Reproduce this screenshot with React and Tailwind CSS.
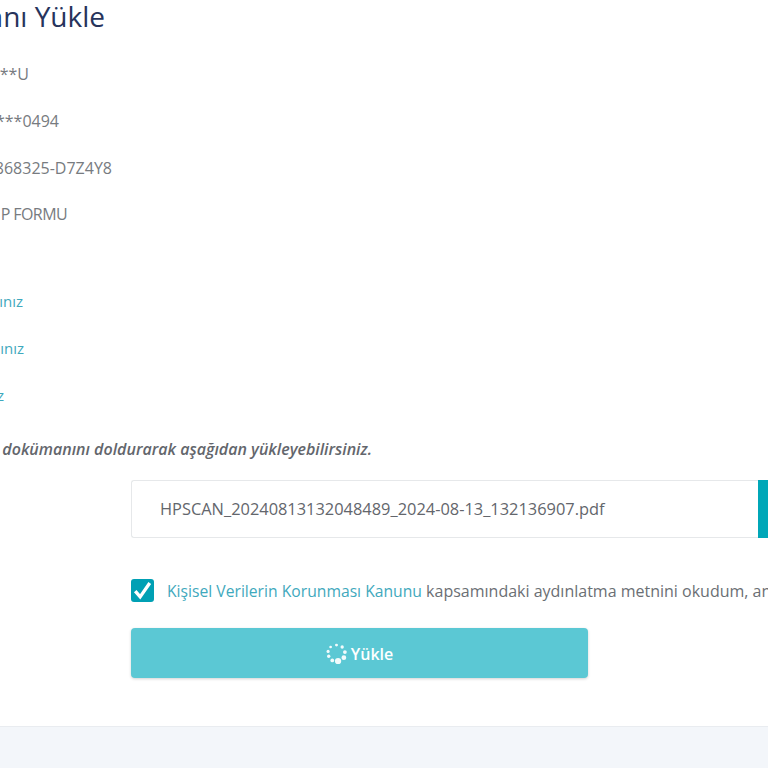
import React from "react";

function Spinner() {
  const dots = [
    [10, 2, 1.4], [15.4, 3.8, 1.6], [18, 8.6, 1.8], [17, 14, 2.3], [11.5, 17.2, 3],
    [6, 16.6, 1.8], [2.6, 12.6, 1.6], [2, 8, 1.5], [4.4, 3.8, 1.3],
  ];
  return (
    <svg width="21" height="21" viewBox="0 0 20 20" className="shrink-0">
      {dots.map(([x, y, r], i) => (
        <circle key={i} cx={x} cy={y} r={r} fill="#ffffff" fillOpacity="0.92" />
      ))}
    </svg>
  );
}

function Clip({ w, className, children }) {
  return <div className={`flex justify-end whitespace-nowrap ${w} ${className}`}>{children}</div>;
}

export default function App() {
  return (
    <div className="h-[768px] w-[768px] overflow-hidden bg-white font-['Open_Sans','Liberation_Sans',sans-serif] flex flex-col">
      <div className="h-[726px] flex flex-col">
        <Clip w="w-[105px]" className="h-[32px] text-[28px] leading-[32px] text-[#27345c]">Dokümanı Yükle</Clip>

        <div className="mt-[19px] flex flex-col text-[16px] leading-[47px] text-[#777b80]">
          <Clip w="w-[29px]" className="h-[47px]">*****U</Clip>
          <Clip w="w-[59px]" className="h-[47px]">*****0494</Clip>
          <Clip w="w-[112px]" className="h-[46px]">868325-D7Z4Y8</Clip>
          <Clip w="w-[67px]" className="h-[47px] tracking-[-0.6px]">P FORMU</Clip>
        </div>

        <div className="mt-[40px] flex flex-col text-[15px] leading-[47px] text-[#3fa9bd]">
          <Clip w="w-[23px]" className="h-[47px]">ınız</Clip>
          <Clip w="w-[24px]" className="h-[47px]">ınız</Clip>
          <Clip w="w-[4px]" className="h-[47px]">z</Clip>
        </div>

        <Clip w="w-[372px]" className="mt-[18px] h-[24px] text-[16px] leading-[24px] italic font-semibold text-[#63666c]">
          dokümanını doldurarak aşağıdan yükleyebilirsiniz.
        </Clip>

        <div className="mt-[19px] ml-[131px] flex flex-col items-start">
          <div className="flex h-[58px] w-[637px] shrink-0">
            <div className="flex h-full w-[627px] shrink-0 items-center rounded-l-[3px] border border-r-0 border-[#e6e8ea] bg-white pl-[28px] text-[16.4px] text-[#63666c] whitespace-nowrap">
              HPSCAN_20240813132048489_2024-08-13_132136907.pdf
            </div>
            <div className="h-full w-[10px] bg-[#00a7b8]" />
          </div>

          <div className="mt-[40px] flex h-[24px] w-[637px] items-center gap-[13px] whitespace-nowrap text-[16px] text-[#6b6f74]">
            <div className="flex h-[23px] w-[23px] shrink-0 items-center justify-center rounded-[3px] bg-[#00a0b4]">
              <svg width="19" height="19" viewBox="0 0 17 17" fill="none">
                <path d="M2 9 L6.4 14.2 L15 1.8" stroke="#ffffff" strokeWidth="3" />
              </svg>
            </div>
            <span className="pt-[2px]">
              <span className="text-[15.7px] text-[#3fa9bd]">Kişisel Verilerin Korunması Kanunu</span> kapsamındaki aydınlatma metnini okudum, anladım.
            </span>
          </div>

          <button className="mt-[26px] flex h-[50px] w-[457px] items-center justify-center gap-[4px] rounded-[4px] bg-[#5bc8d4] pt-[1px] text-[16px] font-semibold text-white shadow-[0_1px_3px_rgba(0,0,0,0.18)]">
            <Spinner />
            Yükle
          </button>
        </div>
      </div>
      <div className="flex-1 border-t border-[#e9ecf0] bg-[#f3f6fa]" />
    </div>
  );
}
